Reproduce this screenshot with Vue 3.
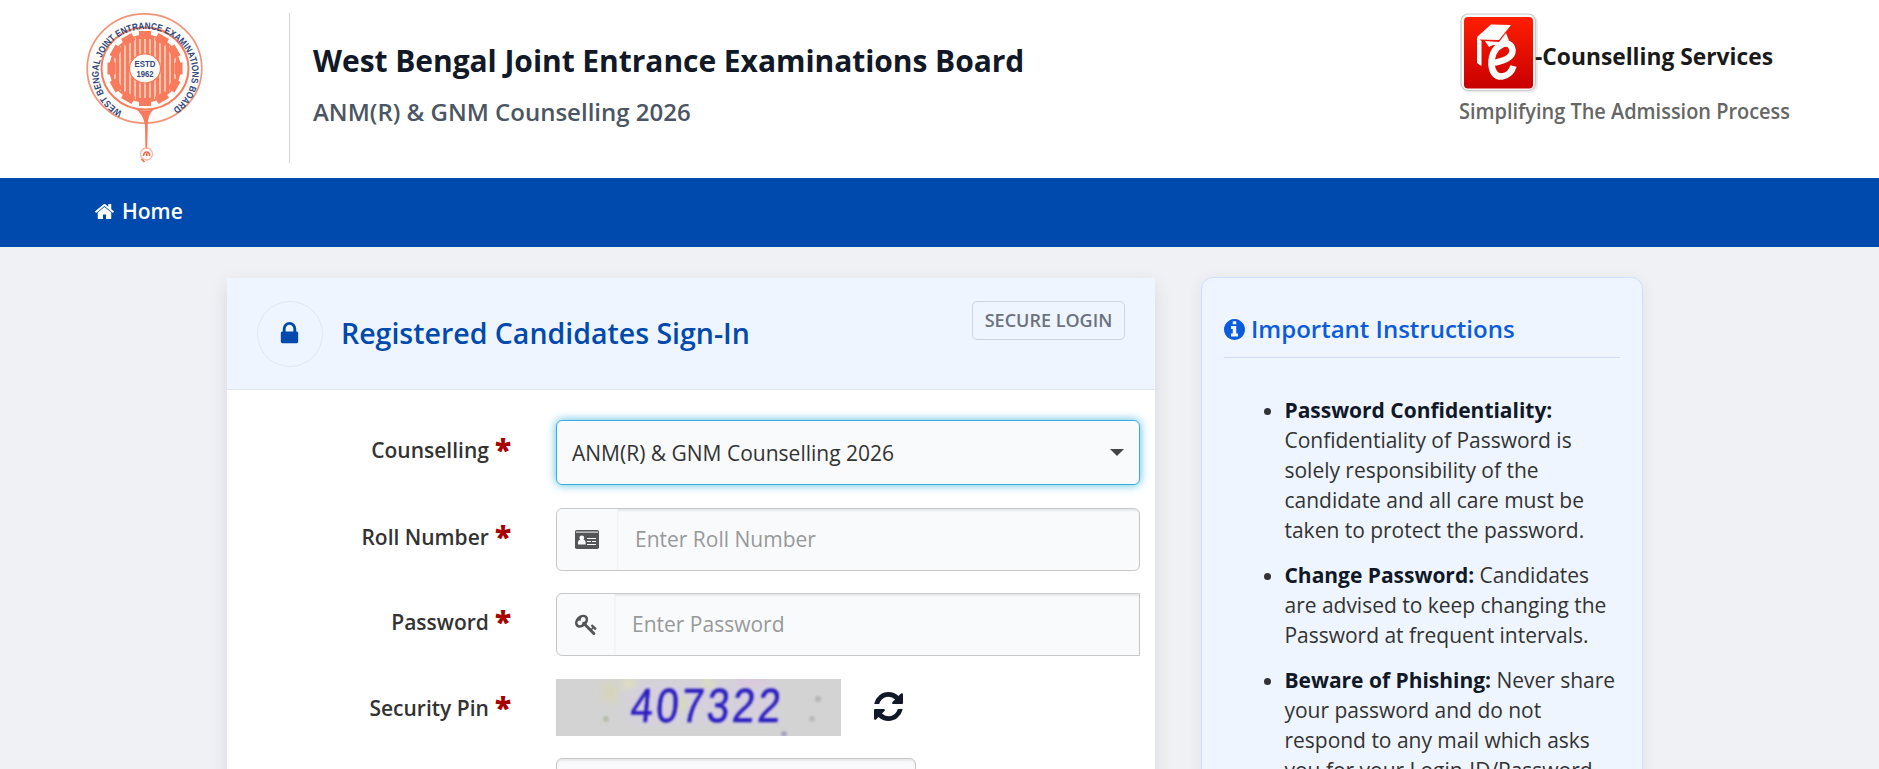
<template>
  <div class="page">
    <header class="site-header">
      <svg class="board-logo" viewBox="0 0 120 150" aria-label="WBJEEB">
        <defs>
          <path id="ringText" d="M36.5 98.5 A46.8 44 0 1 1 85 97" />
          <pattern id="gearStripes" width="5" height="10" patternUnits="userSpaceOnUse">
            <rect width="3" height="10" fill="#f77b5c" />
            <rect x="3" width="2" height="10" fill="#fbc3ae" />
          </pattern>
        </defs>
        <ellipse cx="58.5" cy="55.5" rx="57.3" ry="54.6" fill="#fffdfa" stroke="#f3937a" stroke-width="1.7" />
        <ellipse cx="59" cy="55.5" rx="43.5" ry="41" fill="none" stroke="#f77b5c" stroke-width="2" />
        <ellipse cx="59" cy="55.5" rx="35" ry="33" fill="url(#gearStripes)" stroke="#f77b5c" stroke-width="1.5" />
        <g class="gear-teeth">
          <rect v-for="n in 12" :key="n" x="53" y="18" width="12" height="8" :transform="`rotate(${n * 30} 59 55.5)`" />
        </g>
        <ellipse cx="59" cy="55.5" rx="15.5" ry="14.5" fill="#fffdfa" stroke="#f77b5c" stroke-width="1.2" />
        <text class="ring-label"><textPath href="#ringText" textLength="232" lengthAdjust="spacingAndGlyphs">WEST BENGAL JOINT ENTRANCE EXAMINATIONS BOARD</textPath></text>
        <text x="59" y="53.5" class="estd" textLength="21" lengthAdjust="spacingAndGlyphs">ESTD</text>
        <text x="59" y="63.5" class="estd" textLength="17" lengthAdjust="spacingAndGlyphs">1962</text>
        <path d="M50 96 Q59 99 68 96 Q61.5 102 61.8 112 L61.2 136 H59.4 L59 112 Q57.5 102 50 96Z" fill="#f77b5c" />
        <circle cx="60.5" cy="141" r="6" fill="none" stroke="#f9b7a2" stroke-width="1.3" />
        <path d="M57.5 143 Q58 138.5 61 139 Q64 139.5 63.5 143 M60.8 140 V143 M55.5 146 L58.5 149" fill="none" stroke="#ee6b4c" stroke-width="1.6" />
      </svg>
      <div class="board-titles">
        <h1>West Bengal Joint Entrance Examinations Board</h1>
        <h2>ANM(R) &amp; GNM Counselling 2026</h2>
      </div>
      <svg class="service-logo" viewBox="0 0 335 120">
        <defs>
          <linearGradient id="redTile" x1="0" y1="0" x2="0" y2="1">
            <stop offset="0" stop-color="#ff1e00" />
            <stop offset="1" stop-color="#c80000" />
          </linearGradient>
        </defs>
        <rect x="3" y="1.5" width="76" height="78" rx="8" fill="#ececec" />
        <rect x="2" y="1" width="74.5" height="76.5" rx="7" fill="#fafafa" stroke="#c9c9c9" stroke-width="1.2" />
        <rect x="5" y="4" width="69" height="71.5" rx="4" fill="url(#redTile)" />
        <path d="M18 24 L32 11.5 L52 12 L40 27 L20 26.5Z" fill="#fff" />
        <path d="M18 24 V50 L22.5 53 V28Z" fill="#fff" />
        <path d="M26 28 L40 29 L47 20 L49 25 Q51 27 47 32 L34 32 L30 34Z" fill="#fff" />
        <path d="M33 50 Q54 47 53.5 37 Q52 29 44 31 Q32 36 32.5 52 Q34 64 43 63.5 Q52 62 54.5 53" fill="none" stroke="#fff" stroke-width="6.5" />
        <text x="76" y="51.5" class="service-name" textLength="238" lengthAdjust="spacingAndGlyphs">-Counselling Services</text>
        <text x="0" y="105.5" class="service-tag" textLength="331" lengthAdjust="spacingAndGlyphs">Simplifying The Admission Process</text>
      </svg>
    </header>

    <nav class="main-nav">
      <a class="nav-link">
        <svg viewBox="0 0 1792 1792"><path :d="icons.home" /></svg>
        <span>Home</span>
      </a>
    </nav>

    <main class="content">
      <section class="login-card">
        <div class="card-head">
          <div class="lock-circle">
            <svg viewBox="0 0 1792 1792"><path :d="icons.lock" /></svg>
          </div>
          <h3>Registered Candidates Sign-In</h3>
          <span class="secure-badge">SECURE LOGIN</span>
        </div>

        <form class="login-form" @submit.prevent>
          <div class="form-row row-select">
            <label>Counselling <b>*</b></label>
            <div class="select-box">
              <span>ANM(R) &amp; GNM Counselling 2026</span>
              <i class="caret"></i>
            </div>
          </div>
          <div class="form-row">
            <label>Roll Number <b>*</b></label>
            <div class="input-group">
              <div class="addon addon-card">
                <svg class="card-icon" viewBox="0 0 24 19">
                  <rect width="24" height="19" rx="1.8" fill="#555" />
                  <rect x="1" y="1.6" width="22" height="1" fill="#f8fafc" />
                  <circle cx="6.8" cy="8" r="2.4" fill="#f8fafc" />
                  <path d="M3 14.6 V12.2 Q3 10 5 9.8 H8.6 Q10.6 10 10.6 12.2 V14.6Z" fill="#f8fafc" />
                  <path d="M12 8.5 H21 M12 11.5 H16 M17 11.5 H21 M12 14.5 H21" stroke="#f8fafc" stroke-width="1.1" />
                </svg>
              </div>
              <input v-model="rollNumber" type="text" placeholder="Enter Roll Number">
            </div>
          </div>
          <div class="form-row">
            <label>Password <b>*</b></label>
            <div class="input-group square-right">
              <div class="addon addon-key">
                <svg viewBox="0 0 1792 1792"><path :d="icons.key" /></svg>
              </div>
              <input v-model="password" type="password" placeholder="Enter Password">
            </div>
          </div>
          <div class="form-row row-pin">
            <label>Security Pin <b>*</b></label>
            <div class="captcha">
              <svg class="captcha-image" viewBox="0 0 285 57">
                <defs>
                  <filter id="soft"><feGaussianBlur stdDeviation="0.8" /></filter>
                  <filter id="smudge" x="-20%" y="-20%" width="140%" height="140%"><feGaussianBlur stdDeviation="3" /></filter>
                </defs>
                <rect width="285" height="57" fill="#d3d3d3" />
                <g filter="url(#smudge)" opacity=".7">
                  <rect x="70" y="2" width="150" height="44" fill="#d6d0e0" />
                  <rect x="46" y="4" width="16" height="18" fill="#d6d6b4" />
                  <rect x="66" y="0" width="14" height="10" fill="#e4e2b8" />
                  <rect x="146" y="0" width="12" height="9" fill="#dfe2b6" />
                  <rect x="182" y="0" width="30" height="5" fill="#e6b8e6" />
                  <rect x="122" y="18" width="9" height="16" fill="#dcdcb0" />
                </g>
                <g filter="url(#soft)">
                  <circle cx="50" cy="40" r="3" fill="#b7bfae" />
                  <circle cx="262" cy="20" r="3" fill="#b5b5b5" />
                  <circle cx="256" cy="40" r="3" fill="#bababa" />
                  <circle cx="228" cy="55" r="3" fill="#a9a5bd" />
                  <text x="92" y="43.5" class="pin-digits" transform="skewX(-5) scale(.84 1)">407322</text>
                </g>
              </svg>
              <svg class="refresh" viewBox="128 128 1536 1536"><path :d="icons.refresh" /></svg>
            </div>
          </div>
          <div class="form-row">
            <label></label>
            <div class="input-group pin-input"></div>
          </div>
        </form>
      </section>

      <aside class="instructions">
        <h4>
          <svg viewBox="128 128 1536 1536"><path :d="icons.info" /></svg>
          <span>Important Instructions</span>
        </h4>
        <ul>
          <li v-for="item in instructions" :key="item.title"><strong>{{ item.title }}</strong> {{ item.text }}</li>
        </ul>
      </aside>
    </main>
  </div>
</template>

<script setup>
import { ref } from 'vue'

const rollNumber = ref('')
const password = ref('')

const instructions = [
  {
    title: 'Password Confidentiality:',
    text: 'Confidentiality of Password is solely responsibility of the candidate and all care must be taken to protect the password.'
  },
  {
    title: 'Change Password:',
    text: 'Candidates are advised to keep changing the Password at frequent intervals.'
  },
  {
    title: 'Beware of Phishing:',
    text: 'Never share your password and do not respond to any mail which asks you for your Login-ID/Password.'
  }
]

const icons = {
  home: 'M1472 992v480q0 26-19 45t-45 19h-384v-384h-256v384h-384q-26 0-45-19t-19-45v-480q0-1 .5-3t.5-3l575-474 575 474q1 2 1 6zm223-69l-62 74q-8 9-21 11h-3q-13 0-21-7l-692-577-692 577q-12 8-24 7-13-2-21-11l-62-74q-8-10-7-23.5t11-21.5l719-599q32-26 76-26t76 26l244 204v-195q0-14 9-23t23-9h192q14 0 23 9t9 23v408l219 182q10 8 11 21.5t-7 23.5z',
  lock: 'M640 768h512v-192q0-106-75-181t-181-75-181 75-75 181v192zm832 96v576q0 40-28 68t-68 28h-960q-40 0-68-28t-28-68v-576q0-40 28-68t68-28h32v-192q0-184 132-316t316-132 316 132 132 316v192h32q40 0 68 28t28 68z',
  key: 'M832 512q0-80-56-136t-136-56-136 56-56 136q0 42 19 83-41-19-83-19-80 0-136 56t-56 136 56 136 136 56 136-56 56-136q0-42-19-83 41 19 83 19 80 0 136-56t56-136zm851 704q0 17-49 66t-66 49q-9 0-28.5-16t-36.5-33-38.5-40-24.5-26l-96 96 220 220q28 28 28 68 0 42-39 81t-81 39q-40 0-68-28l-671-671q-176 131-365 131-163 0-265.5-102.5t-102.5-265.5q0-160 95-313t248-248 313-95q163 0 265.5 102.5t102.5 265.5q0 189-131 365l355 355 96-96q-3-3-26-24.5t-40-38.5-33-36.5-16-28.5q0-17 49-66t66-49q13 0 23 10 6 6 46 44.5t82 79.5 86.5 86 73 78 28.5 41z',
  refresh: 'M1639 1056q0 5-1 7-64 268-268 434.5t-478 166.5q-146 0-282.5-55t-243.5-157l-129 129q-19 19-45 19t-45-19-19-45v-448q0-26 19-45t45-19h448q26 0 45 19t19 45-19 45l-137 137q71 66 161 102t187 36q134 0 250-65t186-179q11-17 53-117 8-23 30-23h192q13 0 22.5 9.5t9.5 22.5zm25-800v448q0 26-19 45t-45 19h-448q-26 0-45-19t-19-45 19-45l138-138q-148-137-349-137-134 0-250 65t-186 179q-11 17-53 117-8 23-30 23h-199q-13 0-22.5-9.5t-9.5-22.5v-7q65-268 270-434.5t480-166.5q146 0 284 55.5t245 156.5l130-129q19-19 45-19t45 19 19 45z',
  info: 'M1152 1376v-160q0-14-9-23t-23-9h-96v-512q0-14-9-23t-23-9h-320q-14 0-23 9t-9 23v160q0 14 9 23t23 9h96v320h-96q-14 0-23 9t-9 23v160q0 14 9 23t23 9h448q14 0 23-9t9-23zm-128-896v-160q0-14-9-23t-23-9h-192q-14 0-23 9t-9 23v160q0 14 9 23t23 9h192q14 0 23-9t9-23zm640 416q0 209-103 385.5t-279.5 279.5-385.5 103-385.5-103-279.5-279.5-103-385.5 103-385.5 279.5-279.5 385.5-103 385.5 103 279.5 279.5 103 385.5z'
}
</script>

<style>
html,
body {
  margin: 0;
  height: 100%;
  overflow: hidden;
  background: #eff1f5;
}
</style>

<style scoped>
* {
  box-sizing: border-box;
}
.page {
  height: 769px;
  overflow: hidden;
  background: #eff1f5;
  color: #333;
  font-family: "Open Sans", sans-serif;
  font-size: 21px;
  line-height: 30px;
}
h1, h2, h3, h4 {
  margin: 0;
}

/* header */
.site-header {
  display: flex;
  align-items: flex-start;
  height: 178px;
  padding: 13px 85px 0 86px;
  background: #fff;
}
.board-logo {
  width: 120px;
  height: 150px;
}
.ring-label {
  fill: #2f4a80;
  font: bold 9.6px "Liberation Sans", sans-serif;
}
.gear-teeth rect {
  fill: #f77b5c;
}
.estd {
  fill: #2f4a80;
  font: bold 9.5px "Liberation Sans", sans-serif;
  text-anchor: middle;
}
.board-titles {
  flex: 1;
  height: 150px;
  margin-left: 83px;
  padding: 27px 0 0 23px;
  border-left: 1px solid #d1d5db;
}
.board-titles h1 {
  color: #111827;
  font-size: 30px;
  font-weight: 700;
  line-height: 42px;
  letter-spacing: -0.05px;
  white-space: nowrap;
}
.board-titles h2 {
  margin-top: 12px;
  color: #4b5563;
  font-size: 24px;
  font-weight: 600;
  line-height: 36px;
}
.service-logo {
  width: 335px;
  height: 120px;
}
.service-name {
  fill: #1a1a1a;
  font-size: 24px;
  font-weight: 700;
}
.service-tag {
  fill: #666;
  font-size: 22px;
  font-weight: 600;
}

/* nav */
.main-nav {
  display: flex;
  height: 69px;
  padding: 0 94px;
  background: #004aad;
}
.nav-link {
  display: flex;
  align-items: center;
  gap: 7px;
  height: 66px;
  color: #fff;
  font-size: 21px;
  font-weight: 600;
}
.nav-link svg {
  width: 21px;
  height: 21px;
  fill: #fff;
}

/* layout */
.content {
  display: flex;
  align-items: flex-start;
  gap: 46px;
  padding: 30px 0 0 227px;
}
.login-card {
  width: 928px;
  height: 700px;
  margin-top: 1px;
  background: #fff;
  box-shadow: 0 6px 18px rgba(17, 24, 39, 0.1);
}
.card-head {
  display: flex;
  align-items: flex-start;
  height: 112px;
  padding: 23px 30px 0;
  background: #eef5ff;
  border-bottom: 1px solid #dfe4ee;
}
.lock-circle {
  display: flex;
  align-items: center;
  justify-content: center;
  width: 66px;
  height: 66px;
  padding: 0 2px 2px 0;
  border: 1px solid #e2e6f3;
  border-radius: 50%;
}
.lock-circle svg {
  width: 27px;
  height: 27px;
  fill: #004aad;
}
.card-head h3 {
  flex: 1;
  margin-left: 18px;
  color: #004aad;
  font-size: 28.5px;
  font-weight: 600;
  line-height: 64px;
}
.secure-badge {
  width: 153px;
  height: 39px;
  border: 1px solid #ccd4e0;
  border-radius: 5px;
  color: #6b7280;
  font-size: 18px;
  font-weight: 600;
  line-height: 37px;
  text-align: center;
}

/* form */
.login-form {
  display: flex;
  flex-direction: column;
  gap: 22px;
  padding: 30px 15px 0 0;
}
.form-row {
  display: flex;
  height: 63px;
}
.row-select {
  height: 65px;
  margin-bottom: 1px;
}
.row-pin {
  height: 57px;
  margin-top: 1px;
}
label {
  display: flex;
  justify-content: flex-end;
  width: 284px;
  margin-right: 45px;
  padding-top: 14px;
  font-weight: 600;
  white-space: nowrap;
}
.row-select label {
  padding-top: 15px;
}
label b {
  margin-left: 6px;
  color: #a80000;
  font-size: 30px;
}
.select-box {
  display: flex;
  flex: 1;
  align-items: center;
  justify-content: space-between;
  padding: 0 15px;
  background: #f8fafc;
  border: 1px solid #38b0de;
  border-radius: 6px;
  box-shadow: 0 0 10px rgba(56, 176, 222, 0.85);
}
.caret {
  border: 7px solid transparent;
  border-top-color: #444;
  border-bottom: 0;
}
.input-group {
  display: flex;
  flex: 1;
  overflow: hidden;
  background: #f8fafc;
  border: 1px solid #c8c8c8;
  border-radius: 6px;
}
.square-right {
  border-radius: 6px 0 0 6px;
}
.addon {
  display: flex;
  align-items: center;
  padding-left: 18px;
  border-right: 1px solid #f1f3f5;
}
.addon-card {
  width: 61px;
}
.addon-key {
  width: 58px;
}
.addon svg {
  width: 23px;
  height: 23px;
  fill: #555;
}
.addon .card-icon {
  width: 24px;
  height: 19px;
}
.input-group input {
  flex: 1;
  min-width: 0;
  padding: 0 17px 1px;
  background: transparent;
  border: 0;
  outline: 0;
  box-shadow: inset 0 2px 2px rgba(0, 0, 0, 0.07);
  font: inherit;
}
.input-group input::placeholder {
  color: #999;
  opacity: 1;
}
.captcha {
  display: flex;
  align-items: center;
}
.captcha-image {
  width: 285px;
  height: 57px;
}
.pin-digits {
  fill: #2a1cc0;
  stroke: #2a1cc0;
  stroke-width: 0.6;
  font: 48px "Liberation Sans", sans-serif;
  letter-spacing: 3.6px;
}
.refresh {
  width: 29px;
  height: 29px;
  margin: -3px 0 0 33px;
  fill: #111827;
}
.pin-input {
  flex: 0 0 360px;
  box-shadow: inset 0 2px 2px rgba(0, 0, 0, 0.07);
}

/* instructions */
.instructions {
  width: 442px;
  height: 700px;
  padding: 35px 22px;
  background: #eef5ff;
  border: 1px solid #cfe0fc;
  border-radius: 12px;
  box-shadow: 0 3px 16px rgba(17, 24, 39, 0.07);
}
.instructions h4 {
  display: flex;
  align-items: center;
  gap: 6px;
  height: 45px;
  padding-bottom: 12px;
  border-bottom: 1px solid #cfdcf5;
  color: #0b5cda;
  font-size: 24px;
  font-weight: 600;
}
.instructions h4 svg {
  width: 21px;
  height: 21px;
  fill: #0b5cda;
}
.instructions ul {
  margin: 37px 0 0;
  padding: 0 0 0 60.5px;
}
.instructions li {
  margin-bottom: 15px;
  letter-spacing: -0.02px;
}
.instructions strong {
  color: #111827;
}
</style>
